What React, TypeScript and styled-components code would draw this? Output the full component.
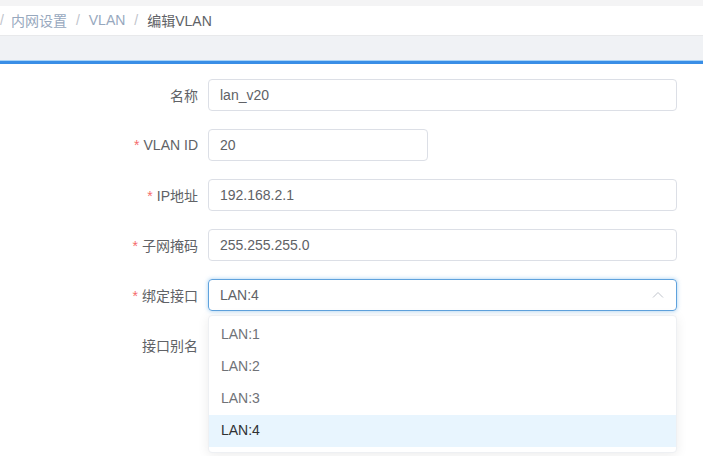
import React from "react";
import styled, { createGlobalStyle } from "styled-components";

const Global = createGlobalStyle`
  html, body { margin: 0; padding: 0; background: #fff; }
  body { font-family: "Liberation Sans", "Noto Sans CJK SC", sans-serif; font-size: 14px; color: #606266; }
  * { box-sizing: border-box; }
`;

const Page = styled.div`
  width: 703px;
  height: 456px;
  overflow: hidden;
  display: flex;
  flex-direction: column;
  background: #fff;
`;

const TopStrip = styled.div`
  height: 6px;
  background: #f4f4f5;
`;

const BreadBar = styled.div`
  height: 30px;
  display: flex;
  align-items: center;
  padding-bottom: 2px;
  background: #fff;
  border-bottom: 1px solid #e8e9eb;
`;

const Crumb = styled.span<{ $current?: boolean }>`
  color: ${(p) => (p.$current ? "#606266" : "#97a8be")};
  font-size: 14px;
  white-space: nowrap;
`;

const Sep = styled.span<{ $first?: boolean }>`
  color: #c0c4cc;
  margin: 0 9px 0 ${(p) => (p.$first ? 0 : 9)}px;
  margin-right: ${(p) => (p.$first ? 7 : 9)}px;
  font-size: 14px;
`;

const Band = styled.div`
  height: 24px;
  background: #f0f2f5;
`;

const BlueLine = styled.div`
  height: 4px;
  background: #3a8ee6;
  border-top: 1px solid #a9d3f7;
`;

const Form = styled.div`
  padding-top: 15px;
  display: flex;
  flex-direction: column;
  gap: 18px;
`;

const Row = styled.div`
  display: flex;
  align-items: center;
  height: 32px;
  position: relative;
`;

const Label = styled.label`
  width: 208px;
  padding-right: 10px;
  text-align: right;
  color: #606266;
  font-size: 14px;
  white-space: nowrap;
`;

const Star = styled.span`
  color: #f56c6c;
  margin-right: 4px;
`;

const Input = styled.div<{ $w: number; $focus?: boolean }>`
  width: ${(p) => p.$w}px;
  height: 32px;
  border: 1px solid ${(p) => (p.$focus ? "#5fa2dd" : "#dcdfe6")};
  box-shadow: ${(p) => (p.$focus ? "0 0 4px rgba(102,175,233,0.6)" : "none")};
  border-radius: 4px;
  padding: 0 12px 0 11px;
  display: flex;
  align-items: center;
  justify-content: space-between;
  color: #606266;
  font-size: 14px;
`;

const Dropdown = styled.div`
  position: absolute;
  left: 208px;
  top: 36px;
  width: 469px;
  background: #fff;
  border: 1px solid #eef0f3;
  border-radius: 4px;
  box-shadow: 0 2px 12px rgba(0, 0, 0, 0.08);
  padding: 3px 0 5px;
  z-index: 10;
`;

const Option = styled.div<{ $selected?: boolean }>`
  height: 32px;
  line-height: 31px;
  padding-left: 12px;
  font-size: 14px;
  color: ${(p) => (p.$selected ? "#303133" : "#707277")};
  background: ${(p) => (p.$selected ? "#e8f5fe" : "transparent")};
`;

const Chevron = () => (
  <svg width="12" height="8" viewBox="0 0 12 8">
    <path d="M1 6.5 L6 1.5 L11 6.5" fill="none" stroke="#c0c4cc" strokeWidth="1" />
  </svg>
);

export default function App() {
  return (
    <Page>
      <Global />
      <TopStrip />
      <BreadBar>
        <Sep $first>/</Sep>
        <Crumb>内网设置</Crumb>
        <Sep>/</Sep>
        <Crumb>VLAN</Crumb>
        <Sep>/</Sep>
        <Crumb $current>编辑VLAN</Crumb>
      </BreadBar>
      <Band />
      <BlueLine />
      <Form>
        <Row>
          <Label>名称</Label>
          <Input $w={469}>lan_v20</Input>
        </Row>
        <Row>
          <Label><Star>*</Star>VLAN ID</Label>
          <Input $w={220}>20</Input>
        </Row>
        <Row>
          <Label><Star>*</Star>IP地址</Label>
          <Input $w={469}>192.168.2.1</Input>
        </Row>
        <Row>
          <Label><Star>*</Star>子网掩码</Label>
          <Input $w={469}>255.255.255.0</Input>
        </Row>
        <Row>
          <Label><Star>*</Star>绑定接口</Label>
          <Input $w={469} $focus>
            LAN:4
            <Chevron />
          </Input>
          <Dropdown>
            <Option>LAN:1</Option>
            <Option>LAN:2</Option>
            <Option>LAN:3</Option>
            <Option $selected>LAN:4</Option>
          </Dropdown>
        </Row>
        <Row>
          <Label>接口别名</Label>
        </Row>
      </Form>
    </Page>
  );
}
